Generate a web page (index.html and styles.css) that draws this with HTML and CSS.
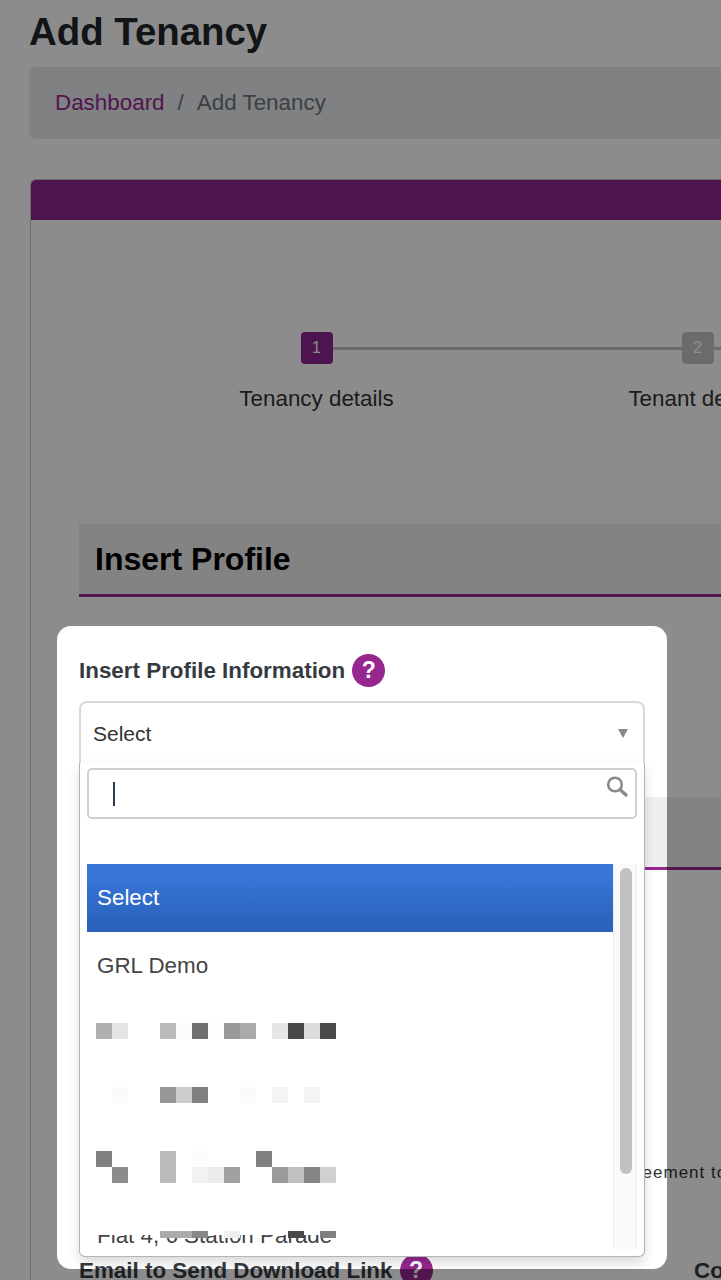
FILE: index.html
```html
<!DOCTYPE html>
<html lang="en">
<head>
<meta charset="utf-8">
<title>Add Tenancy</title>
<link rel="stylesheet" href="styles.css">
</head>
<body>
<main class="page">
  <h1 class="title">Add Tenancy</h1>
  <nav class="breadcrumb"><a class="crumb-link">Dashboard</a><span class="crumb-sep">/</span><span class="crumb-current">Add Tenancy</span></nav>
  <section class="card">
    <div class="card-head"></div>
    <div class="card-body">
      <div class="stepper">
        <div class="step step-active"><span class="step-box">1</span><span class="step-label">Tenancy details</span></div>
        <div class="step"><span class="step-box">2</span><span class="step-label">Tenant details</span></div>
      </div>
      <h2 class="band band-first">Insert Profile</h2>
      <div class="label-row label-profile"><span>Insert Profile Information</span><span class="help">?</span></div>
      <div class="select-wrap">
        <div class="select-box"><span>Select</span><span class="select-arrow"></span></div>
        <div class="dropdown">
          <div class="search">
            <span class="caret"></span>
            <svg class="search-icon" width="24" height="24" viewBox="0 0 24 24" aria-hidden="true"><circle cx="9" cy="9.500" r="6.800" fill="none" stroke="#8a8a8a" stroke-width="2.600"/><path d="M14 14.500 20 20" stroke="#8a8a8a" stroke-width="3.400" stroke-linecap="round"/></svg>
          </div>
          <div class="list">
            <ul class="options">
              <li class="option option-on">Select</li>
              <li class="option">GRL Demo</li>
              <li class="option"></li>
              <li class="option"></li>
              <li class="option"></li>
              <li class="option">Flat 4, 6 Station Parade</li>
            </ul>
            <div class="scrollbar"><span class="thumb"></span></div>
            <svg class="mosaic" width="240" height="215" viewBox="0 0 240 215" aria-hidden="true">
              <rect x="0" y="192" width="240" height="20" fill="#fff"/>
              <rect x="0" y="0" width="16" height="16" fill="#b0b0b0"/><rect x="16" y="0" width="16" height="16" fill="#e4e4e4"/><rect x="64" y="0" width="16" height="16" fill="#bbb"/><rect x="80" y="0" width="16" height="16" fill="#fcfcfc"/><rect x="96" y="0" width="16" height="16" fill="#707070"/><rect x="112" y="0" width="16" height="16" fill="#fdfdfd"/><rect x="128" y="0" width="16" height="16" fill="#999"/><rect x="144" y="0" width="16" height="16" fill="#aaa"/><rect x="176" y="0" width="16" height="16" fill="#e6e6e6"/><rect x="192" y="0" width="16" height="16" fill="#484848"/><rect x="208" y="0" width="16" height="16" fill="#ddd"/><rect x="224" y="0" width="16" height="16" fill="#4a4a4a"/>
              <rect x="16" y="64" width="16" height="16" fill="#fafafa"/><rect x="64" y="64" width="16" height="16" fill="#969696"/><rect x="80" y="64" width="16" height="16" fill="#ccc"/><rect x="96" y="64" width="16" height="16" fill="#808080"/><rect x="144" y="64" width="16" height="16" fill="#fafafa"/><rect x="176" y="64" width="16" height="16" fill="#f4f4f4"/><rect x="208" y="64" width="16" height="16" fill="#f4f4f4"/>
              <rect x="0" y="128" width="16" height="16" fill="#808080"/><rect x="64" y="128" width="16" height="32" fill="#bbb"/><rect x="96" y="128" width="16" height="16" fill="#fcfcfc"/><rect x="160" y="128" width="16" height="16" fill="#808080"/>
              <rect x="16" y="144" width="16" height="16" fill="#8c8c8c"/><rect x="96" y="144" width="16" height="16" fill="#f2f2f2"/><rect x="112" y="144" width="16" height="16" fill="#ececec"/><rect x="128" y="144" width="16" height="16" fill="#a0a0a0"/><rect x="176" y="144" width="16" height="16" fill="#9a9a9a"/><rect x="192" y="144" width="16" height="16" fill="#c0c0c0"/><rect x="208" y="144" width="16" height="16" fill="#858585"/><rect x="224" y="144" width="16" height="16" fill="#d0d0d0"/>
              <rect x="64" y="208" width="32" height="7" fill="#aaa"/><rect x="96" y="208" width="16" height="7" fill="#888"/><rect x="128" y="208" width="16" height="7" fill="#eee"/><rect x="192" y="208" width="16" height="7" fill="#484848"/><rect x="224" y="208" width="16" height="7" fill="#808080"/>
            </svg>
          </div>
        </div>
      </div>
      <h2 class="band band-second"></h2>
      <p class="agreement">agreement to</p>
      <div class="foot-row">
        <div class="label-row"><span>Email to Send Download Link</span><span class="help">?</span></div>
        <div class="label-row foot-second"><span>Contact</span></div>
      </div>
    </div>
  </section>
</main>
<div class="spotlight"></div>
</body>
</html>
```
FILE: styles.css
```css
* { box-sizing: border-box; }
html, body { margin: 0; height: 1280px; overflow: hidden; background: #fff; }
body { position: relative; width: 721px; font-family: "Liberation Sans", Arial, sans-serif; color: #212529; }
.page { width: 1300px; padding: 10px 0 0 29px; }
.title { margin: 0; font-size: 38.400px; line-height: 44px; font-weight: 700; color: #212529; }
.breadcrumb { display: flex; align-items: center; height: 72px; margin-top: 13px; padding-left: 26px; background: #e9ecef; border-radius: 6px; font-size: 22.400px; }
.crumb-link { color: #96278f; }
.crumb-sep { margin: 0 13px; color: #6c757d; }
.crumb-current { color: #6c757d; }
.card { margin: 40px 0 0 1px; border-left: 1px solid #c4c4c4; border-top: 1px solid #c4c4c4; border-top-left-radius: 6px; }
.card-head { height: 40px; background: #8e2691; border-top-left-radius: 5px; }
.card-body { padding: 112px 0 0 48px; }
.stepper { display: grid; grid-template-columns: 381px 381px; margin-left: 47px; }
.step { position: relative; display: flex; flex-direction: column; align-items: center; }
.step::after { content: ""; position: absolute; left: 50%; top: 15px; width: 100%; height: 3px; background: #c4c4c4; }
.step-box { position: relative; z-index: 1; display: flex; align-items: center; justify-content: center; width: 32px; height: 32px; border-radius: 4px; background: #c4c4c4; color: #fff; font-size: 16px; }
.step-active .step-box { background: #8e2691; }
.step-label { margin-top: 21px; font-size: 22.400px; line-height: 28px; white-space: nowrap; color: #333; }
.band { height: 73px; margin: 0; padding: 0 0 0 16px; background: #efefef; border-bottom: 3px solid #96278f; font-size: 32px; line-height: 70px; font-weight: 700; color: #000; }
.band-first { margin-top: 111px; }
.band-second { margin-top: 31px; }
.label-row { display: flex; align-items: center; gap: 7px; height: 33px; font-size: 22.400px; font-weight: 700; color: #343a40; white-space: nowrap; }
.label-profile { margin-top: 57px; }
.help { display: flex; align-items: center; justify-content: center; width: 33px; height: 33px; border-radius: 50%; background: #96278f; color: #fff; font-size: 23px; font-weight: 700; }
.select-wrap { position: relative; width: 566px; margin-top: 14px; }
.select-box { display: flex; align-items: center; justify-content: space-between; height: 65px; padding: 0 15px 0 12px; border: 2px solid #d9d9d9; border-radius: 8px 8px 0 0; background: #fff; font-size: 21px; color: #333; }
.select-arrow { width: 0; height: 0; border-left: 5.500px solid transparent; border-right: 5.500px solid transparent; border-top: 9px solid #8a8a8a; }
.dropdown { position: absolute; z-index: 2; left: 0; top: 62px; width: 566px; height: 494px; padding: 5px 7px 7px; background: #fff; border: 1px solid #b4b4b4; border-top: 0; border-radius: 0 0 6px 6px; box-shadow: 0 6px 12px rgba(0, 0, 0, 0.14); }
.search { position: relative; height: 51px; border: 2px solid #d0d0d0; border-radius: 5px; background: #fff; }
.caret { position: absolute; left: 24px; top: 12px; width: 2px; height: 24px; background: #2c3e50; }
.search-icon { position: absolute; right: 5px; top: 5px; }
.list { position: relative; display: flex; height: 385px; margin-top: 45px; overflow: hidden; }
.options { flex: 1; margin: 0; padding: 0; list-style: none; }
.option { display: flex; align-items: center; height: 67.500px; padding: 1px 0 0 10px; font-size: 22.400px; color: #444; white-space: nowrap; }
.option-on { background: linear-gradient(#3875d7 20%, #2a62bc 90%); color: #fff; }
.scrollbar { width: 24px; padding: 4px 4px 0 6px; background: #f9f9f9; border-left: 1px solid #f0f0f0; border-right: 1px solid #ececec; }
.thumb { display: block; height: 306px; border-radius: 7px; background: #c1c1c1; }
.mosaic { position: absolute; left: 9px; top: 159px; }
.agreement { margin: 291px 0 0; padding-left: 536px; font-size: 17px; line-height: 24px; letter-spacing: 1px; color: #333; }
.foot-row { display: grid; grid-template-columns: 615px auto; margin-top: 69px; }
.spotlight { position: absolute; z-index: 1; left: 57px; top: 626px; width: 610px; height: 643px; border-radius: 14px; box-shadow: 0 0 0 3000px rgba(0, 0, 0, 0.45); pointer-events: none; }
```
